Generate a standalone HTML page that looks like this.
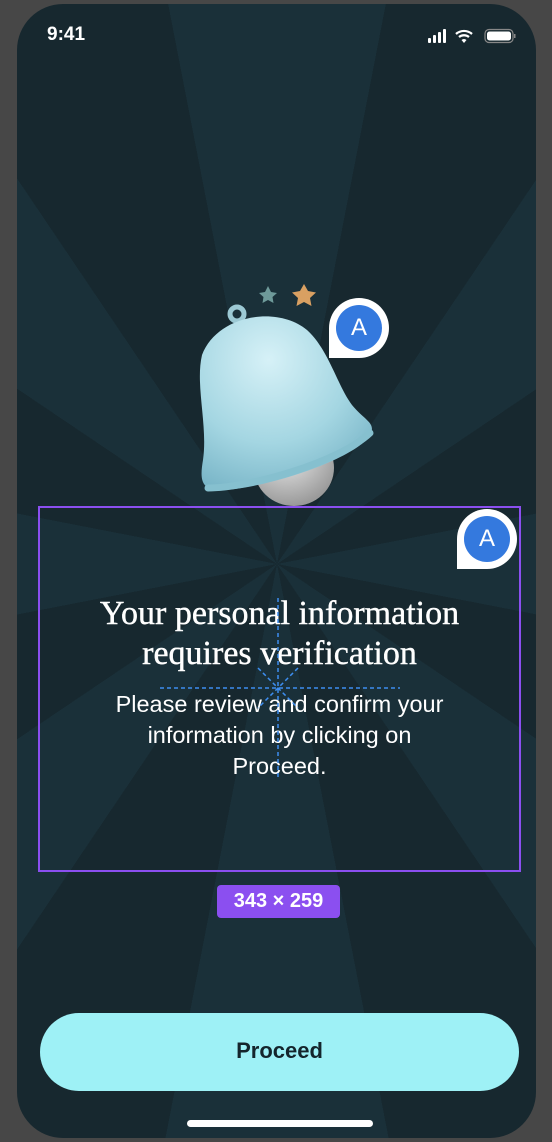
<!DOCTYPE html>
<html><head><style>
html,body{margin:0;padding:0;}
body{width:552px;height:1142px;background:#474747;position:relative;overflow:hidden;font-family:"Liberation Sans",sans-serif;}
.dev{position:absolute;left:17px;top:4px;width:519px;height:1134px;border-radius:46px;overflow:hidden;background:repeating-conic-gradient(from -11deg at 260px 560px,#1a3039 0deg 22deg,#17282f 22deg 45deg);}
.abs{position:absolute;}
.time{left:47px;top:24px;color:#fff;font-size:19px;font-weight:bold;}
.badge{position:absolute;width:60px;height:60px;background:#fff;border-radius:30px 30px 30px 0;}
.badge div{position:absolute;left:7px;top:7px;width:46px;height:46px;border-radius:50%;background:#3479de;color:#fff;font-size:24px;text-align:center;line-height:46px;}
.box{left:38px;top:506px;width:479px;height:362px;border:2px solid #8b4ff0;}
.title{left:38px;width:483px;top:594px;text-align:center;color:#fff;font-family:"Liberation Serif",serif;font-size:34px;line-height:40px;-webkit-text-stroke:0.4px #fff;}
.body{left:38px;width:483px;top:689px;text-align:center;color:#fff;font-size:23.5px;line-height:31px;}
.lbl{left:217px;top:885px;width:123px;height:33px;background:#8b4ff0;border-radius:4px;color:#fff;font-size:20px;font-weight:bold;text-align:center;line-height:33px;}
.btn{left:40px;top:1013px;width:479px;height:78px;border-radius:39px;background:#9ef1f6;color:#14252c;font-size:22px;font-weight:bold;text-align:center;line-height:76px;}
.home{left:187px;top:1120px;width:186px;height:7px;border-radius:4px;background:#fff;}
</style></head><body>
<div class="dev"></div>
<div class="abs time">9:41</div>
<svg class="abs" style="left:426px;top:28px" width="90" height="18">
<rect x="2" y="10" width="3" height="5" rx="1" fill="#fff"/><rect x="7" y="7" width="3" height="8" rx="1" fill="#fff"/><rect x="12" y="4" width="3" height="11" rx="1" fill="#fff"/><rect x="17" y="1" width="3" height="14" rx="1" fill="#fff"/>
<path d="M30 6a12 12 0 0 1 16 0M33 9a8 8 0 0 1 10 0" stroke="#fff" stroke-width="2.2" fill="none"/><path d="M35.5 12l2.5 3 2.5-3a4 4 0 0 0-5 0z" fill="#fff"/>
<rect x="59" y="1.5" width="28" height="13" rx="4" fill="none" stroke="#888" stroke-width="1.2"/><rect x="61" y="3.5" width="24" height="9" rx="2.5" fill="#fff"/><rect x="88" y="6" width="1.5" height="4" fill="#888"/>
</svg>
<svg class="abs" style="left:180px;top:280px" width="220" height="230">
<defs>
<radialGradient id="bg" cx="0.4" cy="0.25" r="0.8"><stop offset="0" stop-color="#d6f1f7"/><stop offset="0.6" stop-color="#a4d6e2"/><stop offset="1" stop-color="#7ab6c8"/></radialGradient>
<radialGradient id="cl" cx="0.4" cy="0.3" r="0.7"><stop offset="0" stop-color="#eee"/><stop offset="1" stop-color="#9a9a9a"/></radialGradient>
</defs>
<path d="M88 6l3 6 6 1-4.5 4 1 6-5.5-3-5.5 3 1-6-4.5-4 6-1z" fill="#6e9a9a"/>
<path d="M124 4l4 7 8 1.5-6 5.5 1.5 8-7.5-4-7.5 4 1.5-8-6-5.5 8-1.5z" fill="#d9a062"/>
<circle cx="57" cy="34" r="7" fill="none" stroke="#9cc9d4" stroke-width="5"/>
<ellipse cx="114" cy="188" rx="40" ry="38" fill="url(#cl)"/>
<path d="M22 75c15-40 75-50 105-25 22 20 30 55 45 75 12 15 25 18 18 30-15 25-110 55-150 55-20 0-20-12-17-30 5-35-8-75-1-105z" fill="url(#bg)"/>
<path d="M28 208c40 0 130-25 162-55" stroke="#86c0cf" stroke-width="7" fill="none" stroke-linecap="round"/>
</svg>
<div class="badge" style="left:329px;top:298px"><div>A</div></div>
<div class="abs box"></div>
<div class="badge" style="left:457px;top:509px"><div>A</div></div>
<div class="abs title">Your personal information<br>requires verification</div>
<div class="abs body">Please review and confirm your<br>information by clicking on<br>Proceed.</div>
<svg class="abs" style="left:150px;top:596px" width="260" height="186">
<g stroke="#3d8ef0" stroke-width="1.5" stroke-dasharray="4 3" fill="none">
<path d="M128 2V184M10 92H250M108 72l40 40M148 72l-40 40"/></g></svg>
<div class="abs lbl">343 × 259</div>
<div class="abs btn">Proceed</div>
<div class="abs home"></div>
</body></html>
